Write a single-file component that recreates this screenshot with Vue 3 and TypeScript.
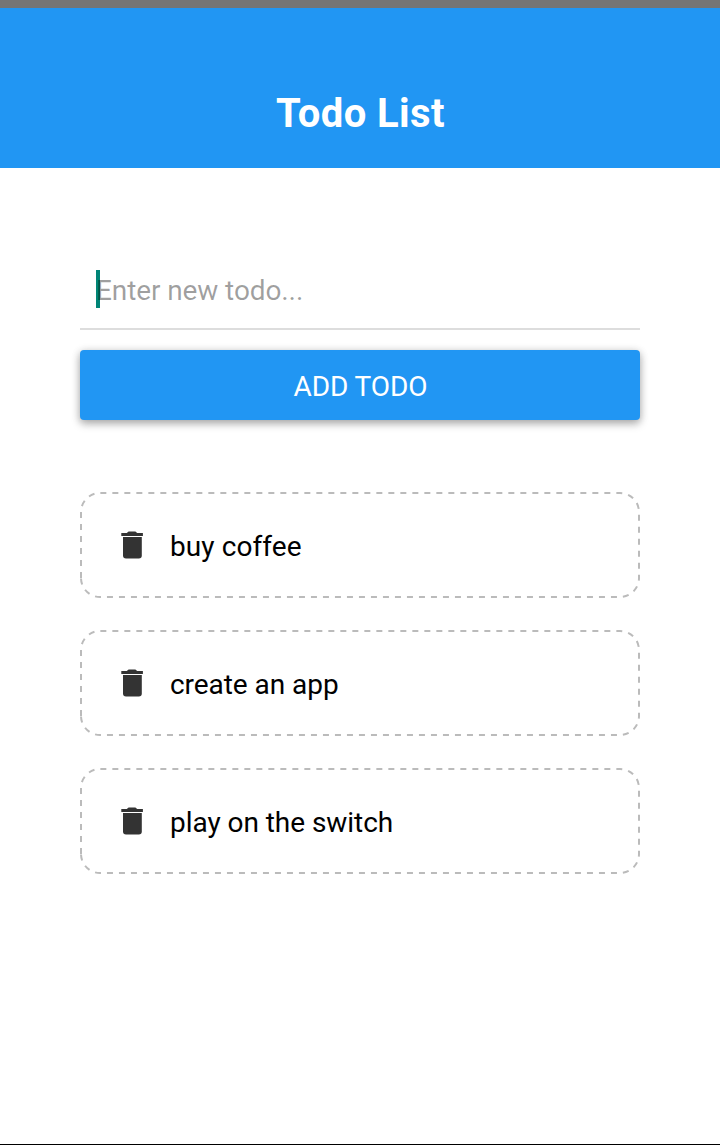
<script setup lang="ts">
import { ref } from 'vue'

interface Todo {
  id: number
  text: string
}

const todos = ref<Todo[]>([
  { id: 1, text: 'buy coffee' },
  { id: 2, text: 'create an app' },
  { id: 3, text: 'play on the switch' },
])

function remove(id: number): void {
  todos.value = todos.value.filter((todo) => todo.id !== id)
}
</script>

<template>
  <div class="screen">
    <div class="status-bar"></div>
    <header class="header">
      <h1 class="title">Todo List</h1>
    </header>
    <main class="content">
      <div class="field">
        <span class="caret"></span>
        <span class="placeholder">Enter new todo...</span>
      </div>
      <button class="add" type="button">ADD TODO</button>
      <ul class="list">
        <li v-for="todo in todos" :key="todo.id" class="item">
          <svg class="outline" width="560" height="106" viewBox="0 0 560 106">
            <path d="M1 86V20A19 19 0 0 1 20 1H540A19 19 0 0 1 559 20V86A19 19 0 0 1 540 105H20A19 19 0 0 1 1 86" />
          </svg>
          <svg class="trash" width="24" height="30" viewBox="0 0 24 30" @click="remove(todo.id)">
            <path d="M1.3 3.1H6.8L8.6 1.4H15.4L17.2 3.1H22.9V6H1.3Z" />
            <path d="M3 7.1H21.8V25.6Q21.8 28.6 18.8 28.6H6Q3 28.6 3 25.6Z" />
          </svg>
          <span class="text">{{ todo.text }}</span>
        </li>
      </ul>
    </main>
  </div>
</template>

<style>
body {
  margin: 0;
  background: #fff;
}
</style>

<style scoped>
.screen {
  box-sizing: border-box;
  display: flex;
  flex-direction: column;
  width: 720px;
  height: 1145px;
  border-bottom: 1px solid #000;
  background: #fff;
  font-family: Roboto, sans-serif;
  font-size: 28px;
  overflow: hidden;
}
.status-bar {
  height: 8px;
  background: #757575;
}
.header {
  box-sizing: border-box;
  height: 160px;
  padding: 77px 0 0 1px;
  background: #2196f3;
}
.title {
  margin: 0;
  color: #fff;
  font-size: 40px;
  font-weight: 700;
  letter-spacing: 0.4px;
  line-height: 58px;
  text-align: center;
}
.content {
  display: flex;
  flex-direction: column;
  padding: 84px 80px 0;
}
.field {
  box-sizing: border-box;
  position: relative;
  height: 78px;
  padding: 20px 16px 0;
  border-bottom: 2px solid #ddd;
  line-height: 38px;
}
.caret {
  position: absolute;
  left: 16px;
  top: 18px;
  width: 4px;
  height: 38px;
  background: #008577;
}
.placeholder {
  position: relative;
  color: rgba(0, 0, 0, 0.38);
  letter-spacing: -0.1px;
}
.add {
  height: 70px;
  margin: 20px 0 0;
  padding: 2px 0 0 1px;
  border: 0;
  border-radius: 4px;
  background: #2196f3;
  box-shadow: 0 4px 9px rgba(0, 0, 0, 0.26), 0 1px 8px rgba(0, 0, 0, 0.16);
  color: #fff;
  font: inherit;
  letter-spacing: -0.1px;
}
.list {
  display: flex;
  flex-direction: column;
  gap: 32px;
  margin: 72px 0 0;
  padding: 0;
  list-style: none;
}
.item {
  position: relative;
  box-sizing: border-box;
  display: flex;
  align-items: flex-start;
  height: 106px;
  padding: 38px 40px 0;
}
.outline {
  position: absolute;
  inset: 0;
  fill: none;
  stroke: #bbb;
  stroke-width: 2;
  stroke-dasharray: 6 6;
  pointer-events: none;
}
.trash {
  fill: #333;
}
.text {
  margin-left: 26px;
  color: #000;
  letter-spacing: -0.05px;
  line-height: 34px;
}
.item:first-child .text {
  letter-spacing: 0.08px;
}
</style>
